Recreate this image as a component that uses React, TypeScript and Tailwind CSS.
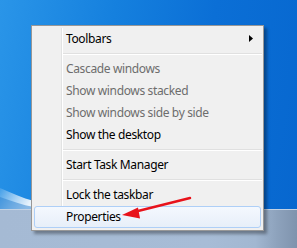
import React from "react";

type Item =
  | { kind: "item"; label: string; disabled?: boolean; submenu?: boolean; hot?: boolean }
  | { kind: "sep" };

const items: Item[] = [
  { kind: "item", label: "Toolbars", submenu: true },
  { kind: "sep" },
  { kind: "item", label: "Cascade windows", disabled: true },
  { kind: "item", label: "Show windows stacked", disabled: true },
  { kind: "item", label: "Show windows side by side", disabled: true },
  { kind: "item", label: "Show the desktop" },
  { kind: "sep" },
  { kind: "item", label: "Start Task Manager" },
  { kind: "sep" },
  { kind: "item", label: "Lock the taskbar" },
  { kind: "item", label: "Properties", hot: true },
];

export default function App() {
  return (
    <div
      className="relative w-[297px] h-[248px] overflow-hidden flex flex-col"
      style={{ fontFamily: '"Noto Sans", "Open Sans", sans-serif' }}
    >
      {/* desktop */}
      <div className="relative h-[209px] bg-[linear-gradient(100deg,#2a95e8_0%,#1580de_35%,#0b6fd6_65%,#0767cf_100%)]">
        <svg className="absolute left-0 top-0" width="297" height="209" viewBox="0 0 297 209">
          <defs>
            <linearGradient id="streak" x1="0" y1="0" x2="1" y2="0.4">
              <stop offset="0" stopColor="#ffffff" stopOpacity="0.15" />
              <stop offset="0.6" stopColor="#ffffff" stopOpacity="0.7" />
              <stop offset="1" stopColor="#ffffff" stopOpacity="1" />
            </linearGradient>
          </defs>
          <path d="M0 188 C 12 193, 22 198, 34 201 L 34 209 L 0 209 Z" fill="url(#streak)" opacity="0.9" />
          <path d="M0 197 C 12 201, 22 205, 34 207 L 34 209 L 0 209 Z" fill="#2a7fd0" opacity="0.5" />
        </svg>
      </div>
      {/* taskbar */}
      <div className="h-[39px] border-t border-[#c3d2e4] bg-[linear-gradient(90deg,#a5bad4_0%,#a7bcd6_70%,#a2b7d1_86%,#8ea3bd_93%,#7f93ad_100%)]" />

      {/* context menu */}
      <div className="absolute left-[31px] top-[25px] w-[233px] border border-[#979797] bg-[#f0f0f0] p-[2px] shadow-[3px_3px_3px_rgba(0,0,0,0.35)] text-[12px] tracking-[-0.36px]">
        <div className="relative">
          <div className="absolute left-[27px] top-0 bottom-0 w-[2px] border-l border-[#e2e3e3] bg-[#ffffff]" />
          {items.map((it, i) =>
            it.kind === "sep" ? (
              <div key={i} className="h-[8px] flex flex-col justify-center ml-[28px] mr-[-1px]">
                <div className="h-px bg-[#e0e0e0]" />
                <div className="h-px bg-[#ffffff]" />
              </div>
            ) : (
              <div
                key={i}
                className={
                  "relative h-[22px] flex items-center " +
                  (it.hot
                    ? "rounded-[3px] border border-[#aecff7] bg-[linear-gradient(180deg,#f4f8fe_0%,#e7eff9_100%)] pl-[31px]"
                    : "pl-[32px]")
                }
              >
                <span
                  className={
                    "leading-none whitespace-nowrap " + (it.disabled ? "text-[#6d6d6d]" : "text-[#000000]")
                  }
                >
                  {it.label}
                </span>
                {it.submenu && (
                  <svg className="absolute right-[8px] top-[7px]" width="4" height="7" viewBox="0 0 4 7">
                    <path d="M0 0 L4 3.5 L0 7 Z" fill="#000000" />
                  </svg>
                )}
              </div>
            )
          )}
        </div>
      </div>

      {/* red arrow */}
      <svg className="absolute left-0 top-0 pointer-events-none" width="297" height="248" viewBox="0 0 297 248">
        <line x1="190" y1="198" x2="134" y2="212" stroke="#e8121a" strokeWidth="2.5" strokeLinecap="round" />
        <path d="M122 215 L138 207.5 L140 218.5 Z" fill="#e8121a" />
      </svg>
    </div>
  );
}
